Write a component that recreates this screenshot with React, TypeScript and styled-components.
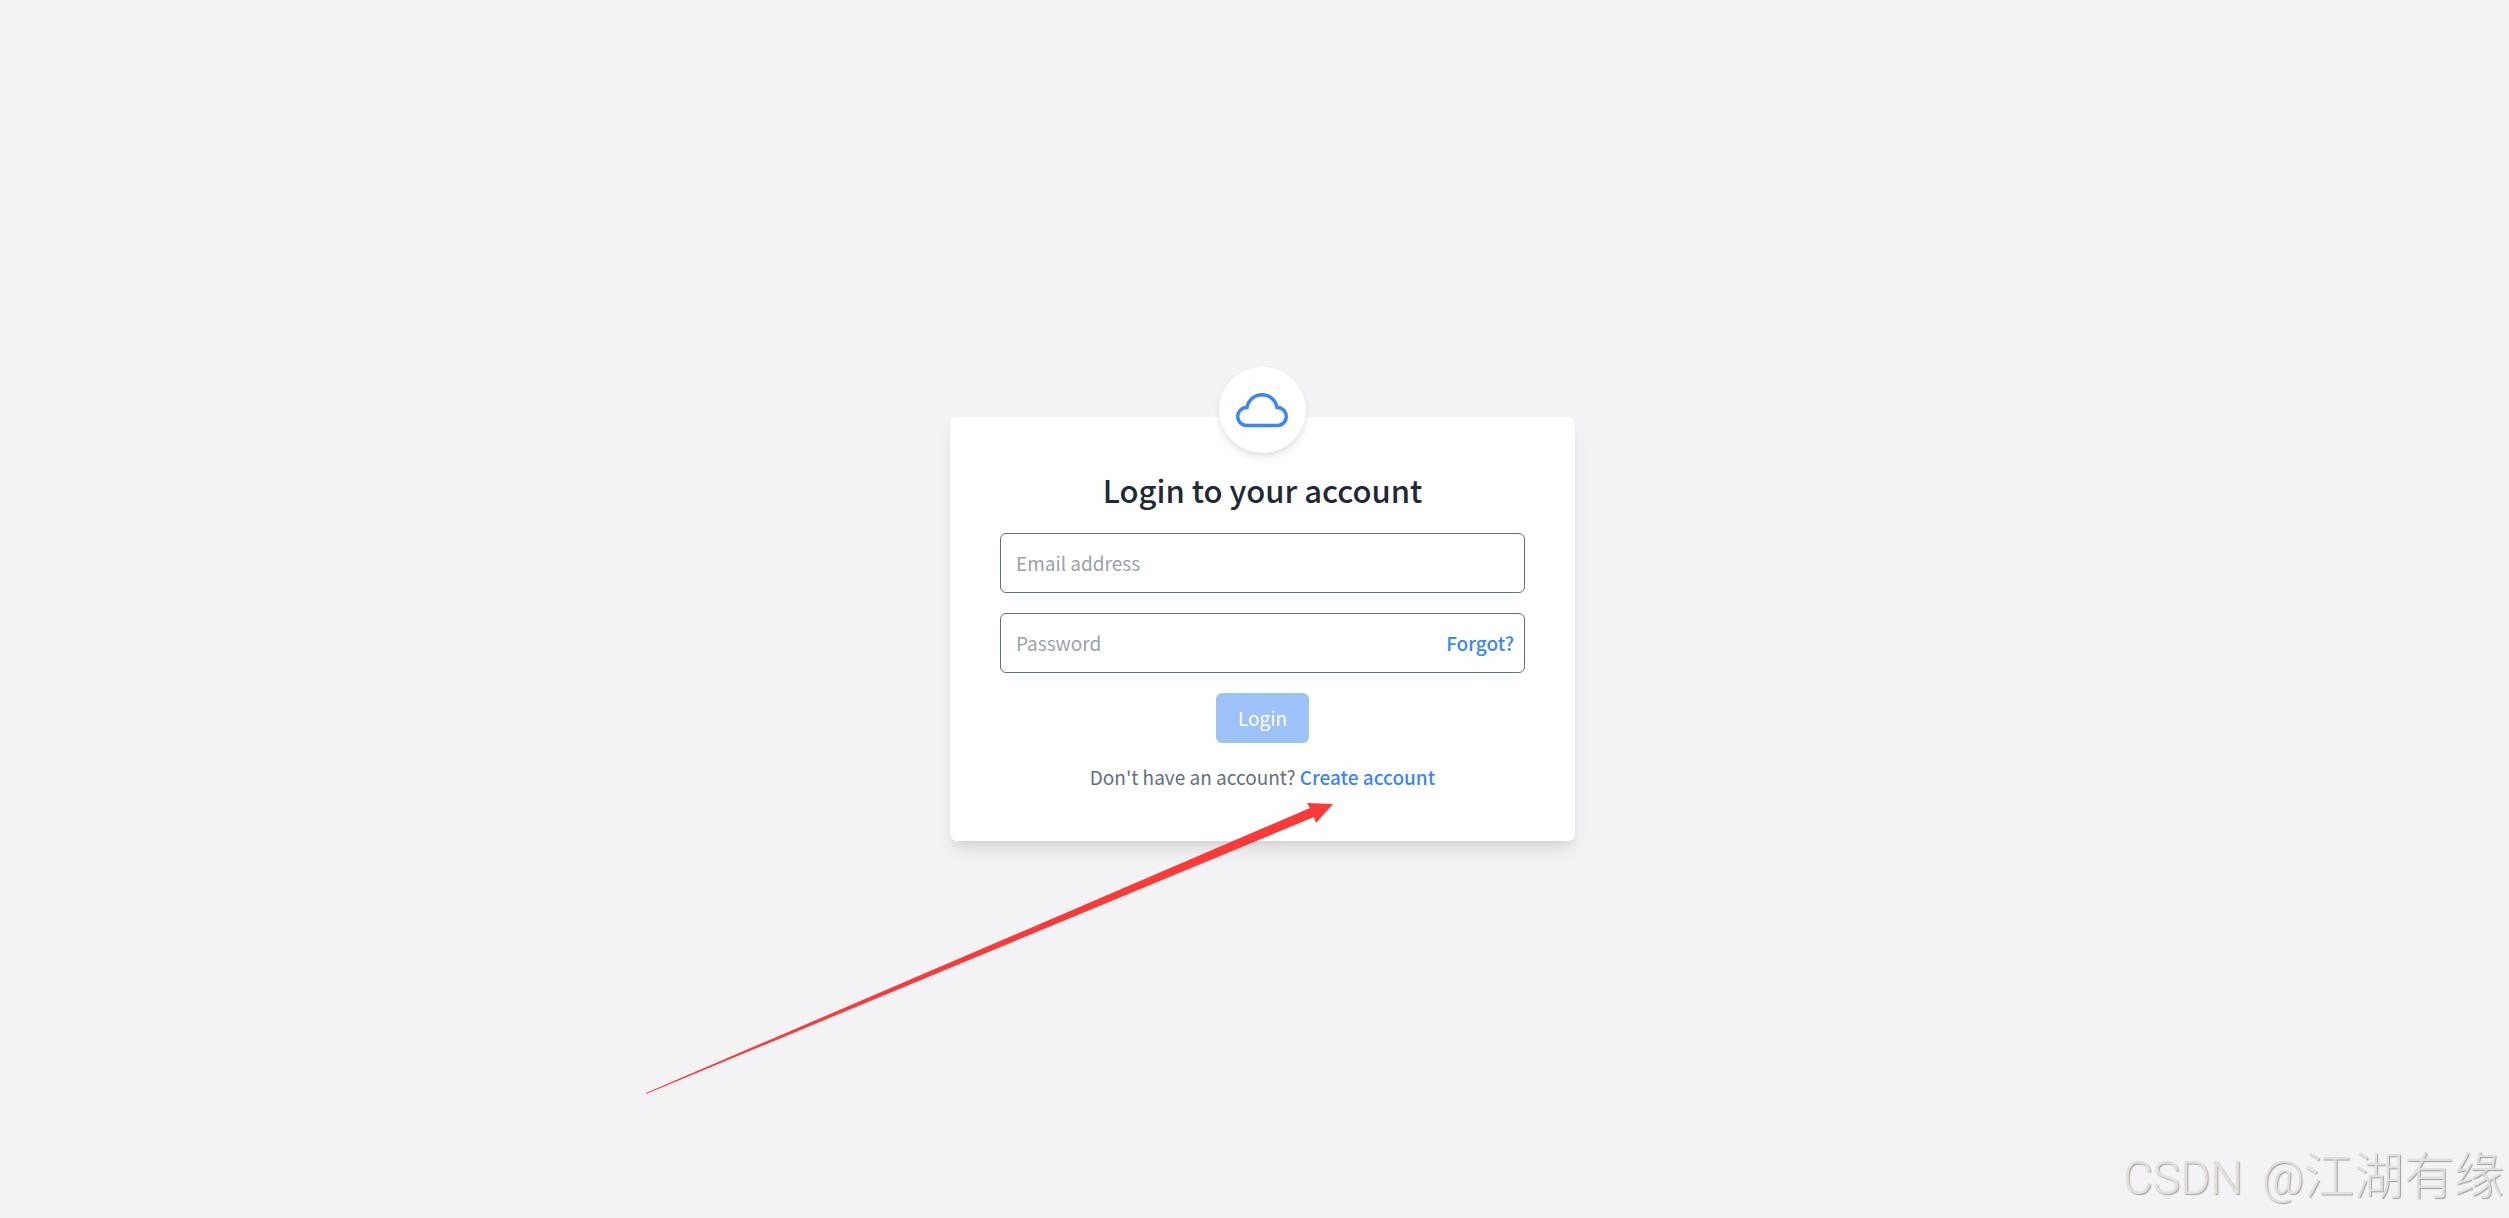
import React, { useState } from "react";
import styled, { createGlobalStyle } from "styled-components";

const GlobalStyle = createGlobalStyle`
  *, *::before, *::after { box-sizing: border-box; }
  body {
    margin: 0;
    background: #f3f3f6;
    color: #617080;
    font-family: "Noto Sans CJK SC", "Noto Sans", sans-serif;
    font-size: 19px;
    line-height: 30px;
  }
`;

const Page = styled.main`
  position: relative;
  min-height: 100vh;
  display: flex;
  align-items: center;
  justify-content: center;
  padding: 40px 0 0 16px;
  overflow: hidden;
`;

const Card = styled.section`
  position: relative;
  width: 100%;
  max-width: 625px;
  display: flex;
  flex-direction: column;
  align-items: center;
  padding: 0 50px 50px;
  border-radius: 7px;
  background: #fff;
  box-shadow: 0 12px 18px -4px rgba(0, 0, 0, 0.1), 0 5px 8px -2px rgba(0, 0, 0, 0.05);
`;

const Badge = styled.div`
  display: flex;
  align-items: center;
  justify-content: center;
  width: 87px;
  height: 86px;
  margin-top: -50px;
  border-radius: 50%;
  background: #fff;
  color: #3b86f6;
  box-shadow: 0 5px 8px -1px rgba(0, 0, 0, 0.1), 0 2px 5px -1px rgba(0, 0, 0, 0.06);
`;

const Title = styled.h1`
  margin: 16px 0 22px;
  color: #1f2937;
  font-size: 31px;
  font-weight: 500;
  line-height: 42px;
`;

const Form = styled.form`
  width: 100%;
  display: flex;
  flex-direction: column;
  align-items: center;
  gap: 20px;
`;

const Field = styled.div`
  width: 100%;
  height: 60px;
  display: flex;
  align-items: center;
  border: 1px solid #617080;
  border-radius: 6px;
  background: #fff;
`;

const Input = styled.input`
  flex: 1;
  min-width: 0;
  height: 100%;
  padding: 0 15px 2px;
  border: 0;
  outline: 0;
  background: transparent;
  color: #1f2937;
  font: inherit;

  &::placeholder {
    color: #9ca0ae;
    opacity: 1;
  }
`;

const TextLink = styled.a<{ $inset?: boolean }>`
  color: #3b86f6;
  font-weight: 500;
  text-decoration: none;
  margin-right: ${({ $inset }) => ($inset ? "10px" : "0")};
`;

const Submit = styled.button`
  height: 50px;
  padding: 0 22px;
  border: 0;
  border-radius: 6px;
  background: #9dc2f8;
  color: #fff;
  font: inherit;
`;

const Signup = styled.p`
  margin: 0;
  line-height: 28px;
`;

const Arrow = styled.svg`
  position: absolute;
  top: 386px;
  left: -306px;
  pointer-events: none;
`;

const Watermark = styled.div`
  position: absolute;
  right: 5px;
  bottom: 10px;
  display: flex;
  align-items: baseline;
  gap: 19px;
  color: #e0e0e1;
  font-family: Roboto, "Noto Sans CJK SC", sans-serif;
  font-size: 46px;
  font-weight: 300;
  line-height: 60px;
  text-shadow: 1px 1px 1px #a0a0a0;
`;

const Author = styled.span`
  display: flex;
  align-items: baseline;
`;

const AuthorName = styled.span`
  font-family: "Noto Sans CJK SC", sans-serif;
  font-size: 50px;
`;

function CloudIcon() {
  return (
    <svg width="53" height="36" viewBox="0 0 53 36" fill="none" aria-hidden="true">
      <path
        d="M11.5 33.5h29a9 9 0 0 0 1.500-18h-1A15.2 15.2 0 0 0 11 15.500h-1a9 9 0 0 0 1.500 18Z"
        stroke="currentColor"
        strokeWidth="3.4"
      />
    </svg>
  );
}

export default function App() {
  const [email, setEmail] = useState("");
  const [password, setPassword] = useState("");

  return (
    <>
      <GlobalStyle />
      <Page>
        <Card>
          <Badge>
            <CloudIcon />
          </Badge>
          <Title>Login to your account</Title>
          <Form onSubmit={(event) => event.preventDefault()}>
            <Field>
              <Input
                type="email"
                aria-label="Email address"
                placeholder="Email address"
                value={email}
                onChange={(event) => setEmail(event.target.value)}
              />
            </Field>
            <Field>
              <Input
                type="password"
                aria-label="Password"
                placeholder="Password"
                value={password}
                onChange={(event) => setPassword(event.target.value)}
              />
              <TextLink href="#forgot" $inset>Forgot?</TextLink>
            </Field>
            <Submit type="submit" disabled={!email || !password}>Login</Submit>
            <Signup>
              Don't have an account? <TextLink href="#create">Create account</TextLink>
            </Signup>
          </Form>
          <Arrow width="690" height="292" viewBox="0 0 690 292" aria-hidden="true">
            <path d="M2 290 L666 5 L663 0 L689 1 L672 20 L670 14 L2 291Z" fill="#fb3a38" />
          </Arrow>
        </Card>
        <Watermark>
          <span>CSDN</span>
          <Author>
            @<AuthorName>江湖有缘</AuthorName>
          </Author>
        </Watermark>
      </Page>
    </>
  );
}
